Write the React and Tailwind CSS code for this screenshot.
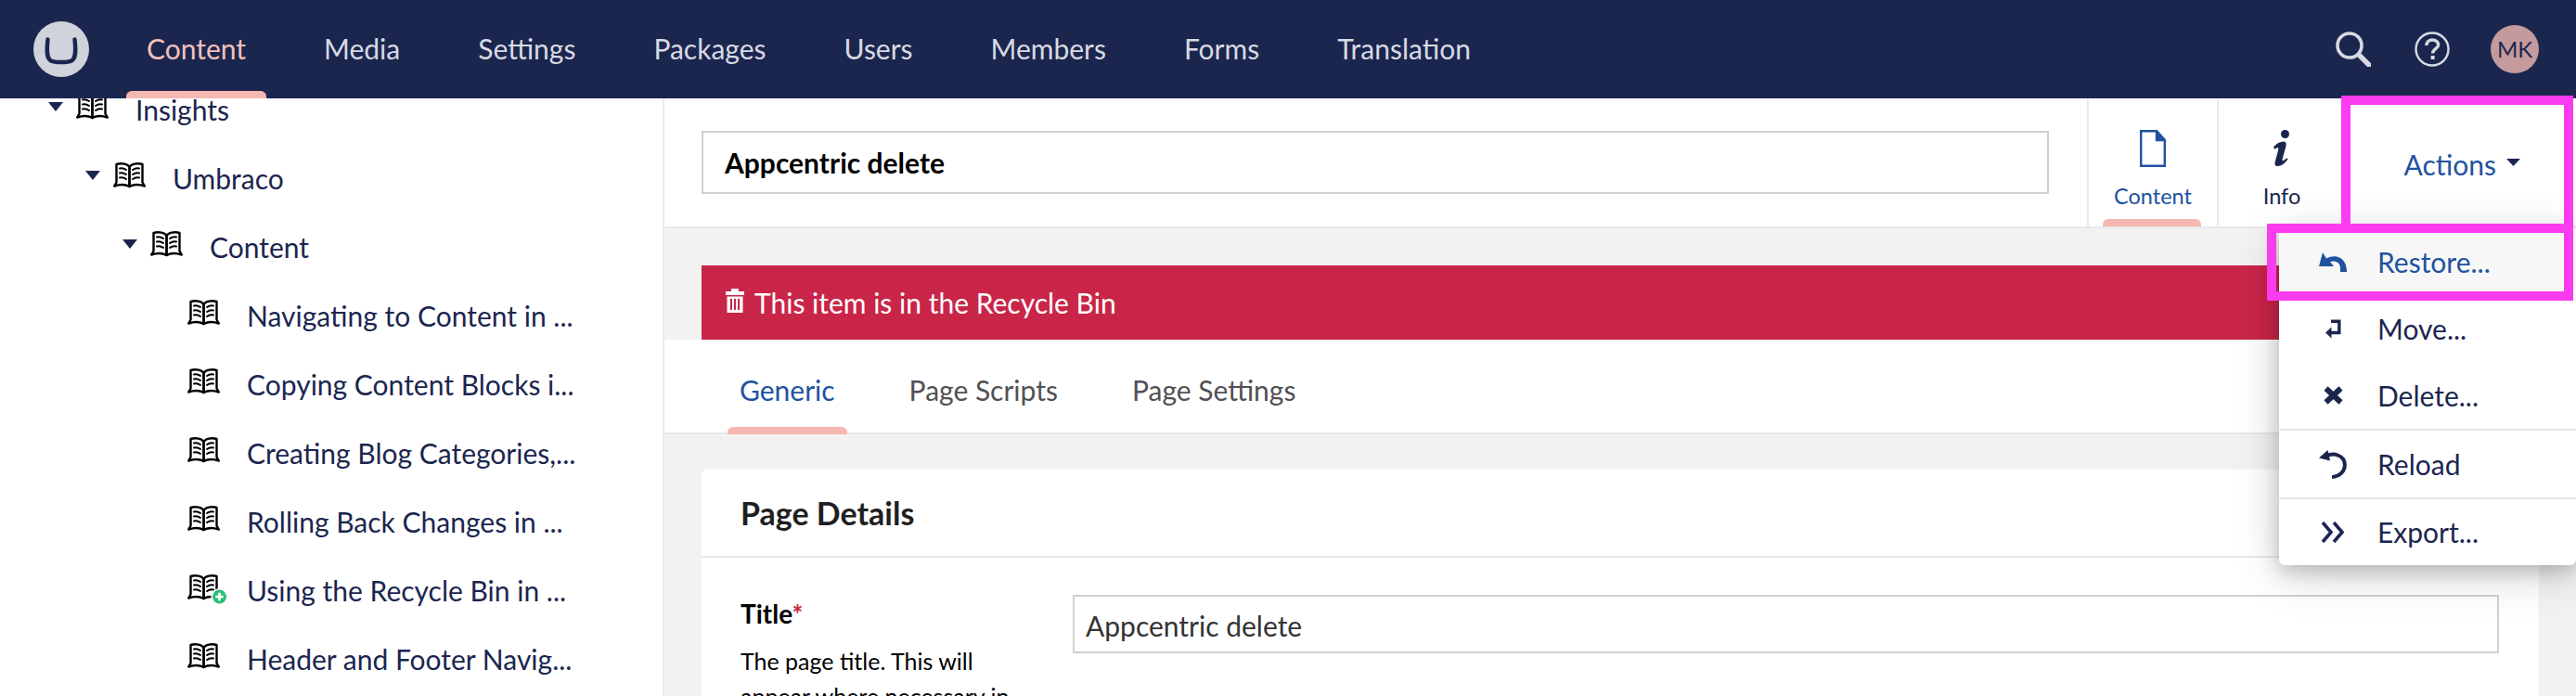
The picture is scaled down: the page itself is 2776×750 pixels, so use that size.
const navItems = ['Content', 'Media', 'Settings', 'Packages', 'Users', 'Members', 'Forms', 'Translation'];

const tree = [
  { label: 'Insights', depth: 0, caret: true },
  { label: 'Umbraco', depth: 1, caret: true },
  { label: 'Content', depth: 2, caret: true },
  { label: 'Navigating to Content in ...', depth: 3 },
  { label: 'Copying Content Blocks i...', depth: 3 },
  { label: 'Creating Blog Categories,...', depth: 3 },
  { label: 'Rolling Back Changes in ...', depth: 3 },
  { label: 'Using the Recycle Bin in ...', depth: 3, badge: true },
  { label: 'Header and Footer Navig...', depth: 3 },
];

const depthPad = ['pl-[52px]', 'pl-[92px]', 'pl-[132px]', 'pl-[172px]'];

function BookIcon({ badge }) {
  return (
    <svg width="35" height="28" viewBox="0 0 35 28" fill="none" className="shrink-0 overflow-visible">
      <g stroke="#000" strokeWidth="2.4" strokeLinejoin="round" strokeLinecap="round">
        <path d="M17.5 26V5C15.5 1.6 9 .4 3.5 2V21.5L1.2 25.5C7 23.5 13 23.5 17.5 26Z" />
        <path d="M17.5 26V5C19.5 1.6 26 .4 31.5 2V21.5L33.8 25.5C28 23.5 22 23.5 17.5 26Z" />
        <path strokeWidth="2" d="M7 6.5C9.5 5.8 12 6.5 14 8M7 11.5C9.5 10.8 12 11.5 14 13M7 16.5C9.5 15.8 12 16.5 14 18M28 6.5C25.5 5.8 23 6.5 21 8M28 11.5C25.5 10.8 23 11.5 21 13M28 16.5C25.5 15.8 23 16.5 21 18" />
      </g>
      {badge && (
        <g>
          <circle cx="34.5" cy="24" r="9" fill="#fff" />
          <circle cx="34.5" cy="24" r="7.5" fill="#2bbf7b" />
          <path d="M34.5 19.8v8.4M30.3 24h8.4" stroke="#fff" strokeWidth="2.6" />
        </g>
      )}
    </svg>
  );
}

function Caret() {
  return (
    <svg width="16" height="10" viewBox="0 0 16 10" className="shrink-0 -translate-y-[3px]">
      <path d="M0 0h16L8 10z" fill="#1b264f" />
    </svg>
  );
}

function TreeRow({ item }) {
  return (
    <div className={`flex h-[74px] items-center ${depthPad[item.depth]}`}>
      {item.caret ? <Caret /> : <span className="w-4 shrink-0" />}
      <span className="ml-[14px] -translate-y-[3px]">
        <BookIcon badge={item.badge} />
      </span>
      <span className="ml-[29px] whitespace-nowrap text-[30px] text-[#1b264f]">{item.label}</span>
    </div>
  );
}

function MenuRow({ icon, label, active, last }) {
  return (
    <div
      className={`flex items-center pl-[43px] text-[30px] ${last ? 'h-[71px]' : 'h-[72px]'} ${
        active ? 'bg-[#f7f7f7] text-[#2152a0]' : 'text-[#1b264f]'
      }`}
    >
      <span className="flex w-[30px] shrink-0 items-center justify-center">{icon}</span>
      <span className="ml-[33px]">{label}</span>
    </div>
  );
}

export default function App() {
  return (
    <div className="relative flex h-[750px] w-[2776px] flex-col overflow-hidden bg-white font-['Lato',sans-serif]">
      {/* top bar */}
      <header className="relative z-10 flex h-[106px] shrink-0 items-center bg-[#1b264f] pl-9 pr-10">
        <svg width="60" height="60" viewBox="0 0 60 60">
          <circle cx="30" cy="30" r="30" fill="#d0d3dc" />
          <path d="M15.5 19.5C14 33 14.5 40 19 42.5C23 44.5 37 44.5 41 42.5C45.5 40 46 33 44.5 19.5" fill="none" stroke="#1b264f" strokeWidth="4.5" strokeLinecap="round" />
        </svg>
        <nav className="ml-[62px] flex h-full gap-[84px]">
          {navItems.map((item, i) => (
            <div key={item} className="relative flex h-full items-center pb-[2px]">
              <span className={`text-[30px] ${i === 0 ? 'text-[#f5c1bc]' : 'text-[#d8dae3]'}`}>{item}</span>
              {i === 0 && (
                <span className="absolute -left-[22px] -right-[22px] bottom-0 h-2 rounded-t-[6px] bg-[#f5b7b1]" />
              )}
            </div>
          ))}
        </nav>
        <div className="ml-auto flex items-center">
          <svg width="38" height="38" viewBox="0 0 38 38" fill="none" stroke="#d8dae3">
            <circle cx="15" cy="15" r="13" strokeWidth="3.6" />
            <path d="M25 25L36 36" strokeWidth="5.4" strokeLinecap="round" />
          </svg>
          <svg width="38" height="38" viewBox="0 0 38 38" fill="none" stroke="#d8dae3" className="ml-[47px]">
            <circle cx="19" cy="19" r="17.5" strokeWidth="2.4" />
            <path d="M12.8 15C13 11 15.8 9 19.2 9C23 9 25.6 11.2 25.6 14.4C25.6 18.4 19.6 18.6 19.6 23.6" strokeWidth="3.4" />
            <path d="M19.6 26v4" strokeWidth="4" />
          </svg>
          <div className="ml-[44px] flex h-[52px] w-[52px] items-center justify-center rounded-full bg-[#c59a9c] text-[24px] text-[#1b264f]">
            MK
          </div>
        </div>
      </header>

      <div className="flex min-h-0 flex-1">
        {/* tree */}
        <aside className="w-[716px] shrink-0 overflow-hidden border-r-2 border-[#e9e9eb]">
          <div className="-mt-[25px]">
            {tree.map((item) => (
              <TreeRow key={item.label} item={item} />
            ))}
          </div>
        </aside>

        {/* editor */}
        <main className="flex min-w-0 flex-1 flex-col bg-[#f3f2f1]">
          <div className="flex h-[140px] shrink-0 items-stretch border-b-2 border-[#e9e9eb] bg-white">
            <div className="flex flex-1 items-center pl-10 pr-[41px]">
              <div className="flex h-[68px] w-full items-center border-2 border-[#d0d0d0] px-[23px] text-[30px] font-bold text-black">
                Appcentric delete
              </div>
            </div>
            <div className="relative flex w-[140px] shrink-0 flex-col items-center border-l-2 border-[#e9e9eb] pt-[34px]">
              <svg width="28" height="40" viewBox="0 0 28 40" fill="none" stroke="#2152a0" strokeWidth="2.4">
                <path d="M1.2 1.2H18L26.8 11V38.8H1.2Z" />
                <path d="M18 1.2V11H26.8L18 1.2Z" fill="#2152a0" />
              </svg>
              <span className="mt-[15px] text-[23.5px] leading-[32px] text-[#2152a0]">Content</span>
              <span className="absolute bottom-0 left-[15px] h-2 w-[106px] rounded-t-[6px] bg-[#f5b7b1]" />
            </div>
            <div className="flex w-[140px] shrink-0 flex-col items-center border-l-2 border-[#e9e9eb] pr-[2px] pt-[34px]">
              <svg width="20" height="40" viewBox="0 0 20 40" fill="#1b264f">
                <circle cx="13.5" cy="4.5" r="4.5" />
                <path d="M1 18.5C4 14.5 8 12.5 12 12.5C14.5 12.5 15.2 14.5 14.4 17.5L10.6 31.5C10.2 33.2 11.2 33.6 12.6 32.6L15.5 30.2L16.5 31.5C13.5 36 9.5 39 5.5 39C2.5 39 2 37 2.8 34L6.2 21.5C6.8 19.2 5.8 18.6 4.2 19.6L2.2 20.8Z" />
              </svg>
              <span className="mt-[15px] text-[23.5px] leading-[32px] text-[#1b264f]">Info</span>
            </div>
            <div className="flex w-[247px] shrink-0 items-center justify-end pr-[60px] pt-1">
              <span className="text-[30px] text-[#2152a0]">Actions</span>
              <span className="ml-[11px] -translate-y-[2px]">
                <svg width="15" height="8" viewBox="0 0 15 8" className="block">
                  <path d="M0 0h15L7.5 8z" fill="#1b264f" />
                </svg>
              </span>
            </div>
          </div>

          <div className="mx-10 mt-[40px] flex h-[80px] shrink-0 items-center bg-[#c92549] pl-[26px] text-[30px] text-white">
            <svg width="20" height="26" viewBox="0 0 20 26" fill="#fff" className="-translate-y-[2px]">
              <path d="M7 0h6a1 1 0 011 1v2h6v4H0V3h6V1a1 1 0 011-1zM1.5 8.5h17V26h-17zM5 11v12h2V11zM9 11v12h2V11zM13 11v12h2V11z" fillRule="evenodd" />
            </svg>
            <span className="ml-[11px]">This item is in the Recycle Bin</span>
          </div>

          <div className="flex h-[102px] shrink-0 items-stretch gap-[80px] border-b-2 border-[#e9e9eb] bg-white pl-[81px] text-[30px] text-[#515054]">
            <div className="relative flex items-center pt-2 text-[#2152a0]">
              Generic
              <span className="absolute -bottom-[2px] -left-[13px] -right-[13px] h-2 rounded-t-[6px] bg-[#f5b7b1]" />
            </div>
            <div className="flex items-center pt-2">Page Scripts</div>
            <div className="flex items-center pt-2">Page Settings</div>
          </div>

          <section className="mx-10 mt-[38px] flex-1 rounded-t-[6px] bg-white">
            <div className="flex h-[95px] items-center border-b-2 border-[#e9e9eb] pl-[42px] text-[34px] font-bold text-[#1f1f22]">
              Page Details
            </div>
            <div className="flex pl-[42px] pt-[40px]">
              <div className="w-[358px] shrink-0">
                <div className="text-[28px] font-bold leading-[40px] text-black">
                  Title<span className="text-[#c92549]">*</span>
                </div>
                <p className="mt-[12px] w-[310px] text-[25px] leading-[38px] text-black">
                  The page title. This will appear where necessary in
                </p>
              </div>
              <div className="flex h-[63px] w-[1537px] items-center border-2 border-[#d0d0d0] px-3 pt-1 text-[30px] text-[#333]">
                Appcentric delete
              </div>
            </div>
          </section>
        </main>
      </div>

      {/* actions dropdown */}
      <div className="absolute left-[2456px] top-[246px] z-20 w-[320px] rounded-b-[6px] bg-white shadow-[0_10px_50px_rgba(0,0,0,0.19),0_6px_20px_rgba(0,0,0,0.19)]">
        <MenuRow
          active
          label="Restore..."
          icon={
            <svg width="30" height="21" viewBox="0 0 30 21" fill="#2152a0">
              <path d="M4 0L0 15H16L12 10C17 8.5 21 10 22.5 14C23 16 23 18 23 21H30C30 14 27.5 8.5 23 6C18.5 3.5 13 4 8 6.5Z" />
            </svg>
          }
        />
        <MenuRow
          label="Move..."
          icon={
            <svg width="17" height="21" viewBox="0 0 17 21" fill="none" stroke="#1b264f" strokeWidth="3.4">
              <path d="M6 2.2H14.8V14.5H4" />
              <path d="M6.5 8.5L0 14.5L6.5 20.5Z" fill="#1b264f" stroke="none" />
            </svg>
          }
        />
        <MenuRow
          label="Delete..."
          icon={
            <svg width="21" height="20" viewBox="0 0 21 20" fill="none" stroke="#1b264f" strokeWidth="6">
              <path d="M2.5 2.5L18.5 17.5M18.5 2.5L2.5 17.5" />
            </svg>
          }
        />
        <div className="h-[2px] bg-[#e9e9eb]" />
        <MenuRow
          label="Reload"
          icon={
            <svg width="30" height="31" viewBox="0 0 30 31" fill="none" stroke="#1b264f" strokeWidth="4">
              <path d="M8 6.5C16 2 27.5 6 27.8 15.5C28 23 22 28.5 14 29" />
              <path d="M9.5 0L0 8.5L12 11.5Z" fill="#1b264f" stroke="none" />
            </svg>
          }
        />
        <div className="h-[2px] bg-[#e9e9eb]" />
        <MenuRow
          last
          label="Export..."
          icon={
            <svg width="26" height="23" viewBox="0 0 26 23" fill="none" stroke="#1b264f" strokeWidth="3.6">
              <path d="M2 1L11 11.5L2 22M14 1L23 11.5L14 22" />
            </svg>
          }
        />
      </div>

      {/* annotation boxes */}
      <div className="absolute left-[2523px] top-[103px] z-30 h-[138px] w-[250px] border-x-[10px] border-t-[10px] border-[#fb3bf0]" />
      <div className="absolute left-[2443px] top-[241px] z-30 h-[83px] w-[330px] border-[10px] border-[#fb3bf0]" />
    </div>
  );
}
